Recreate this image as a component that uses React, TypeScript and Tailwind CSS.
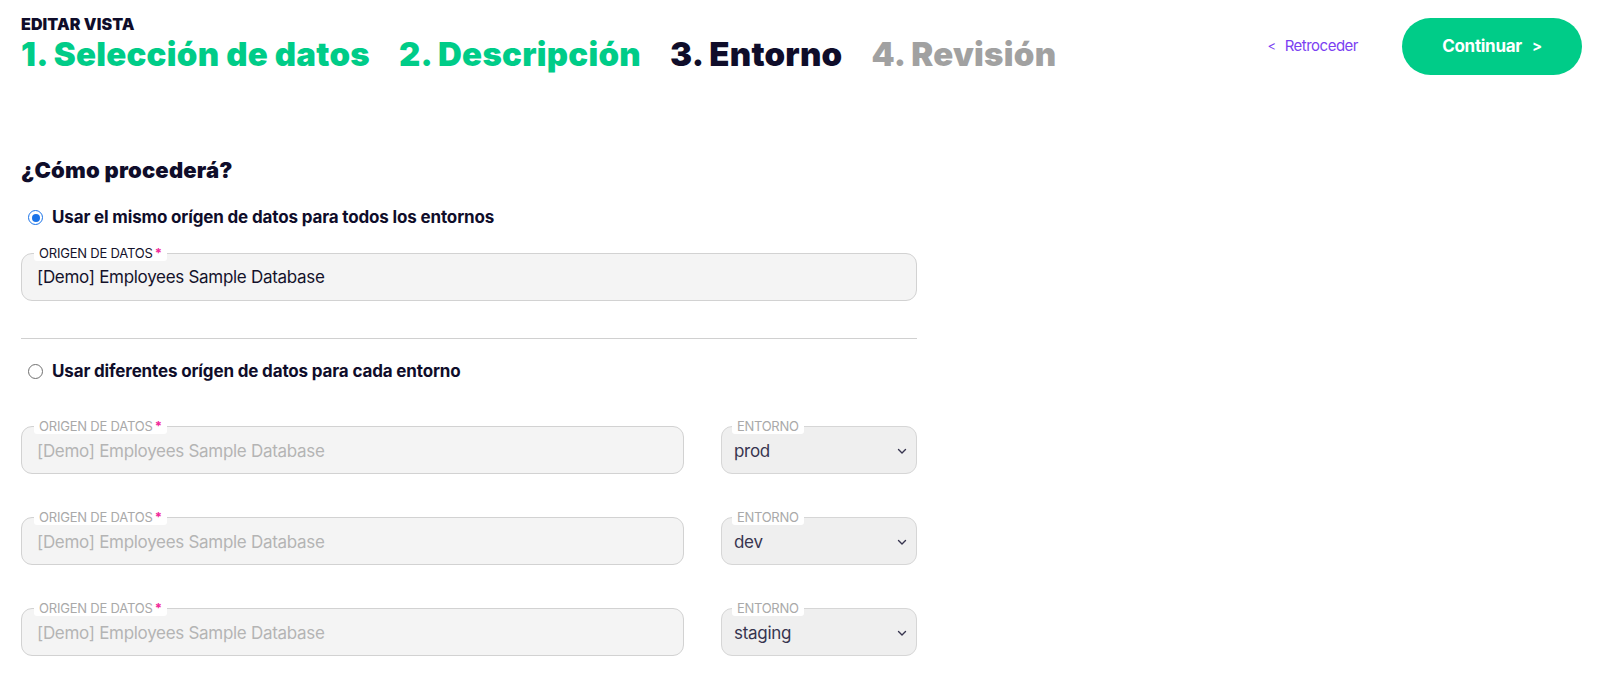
import React, { useState } from 'react';

const green = 'text-[#00cc88]';

const FloatingField = ({
  label,
  required,
  value,
  disabled,
  className,
}: {
  label: string;
  required?: boolean;
  value: string;
  disabled?: boolean;
  className?: string;
}) => (
  <div className={`relative h-[48px] rounded-[11px] border border-[#d2d2d2] bg-[#f4f4f4] flex items-center pl-[15px] pr-4 ${className ?? ''}`}>
    <span
      className={`absolute -top-[9px] left-[12px] bg-white px-[5px] rounded-[3px] text-[13px] leading-[16px] tracking-[-0.2px] ${disabled ? 'text-[#a9a9a9]' : 'text-[#14122b]'}`}
    >
      {label}
      {required && <span className="text-[#f0299a] ml-[2px] font-bold">*</span>}
    </span>
    <span className={`pt-[3px] text-[17px] tracking-[-0.3px] ${disabled ? 'text-[#b4b4b4]' : 'text-[#14122b]'}`}>{value}</span>
  </div>
);

const SelectField = ({ value }: { value: string }) => (
  <div className="relative h-[48px] w-[196px] rounded-[11px] border border-[#d6d6d6] bg-[#efefef] flex items-center justify-between pl-[12px] pr-[8px]">
    <span className="absolute -top-[9px] left-[10px] bg-white px-[5px] rounded-[3px] text-[13px] leading-[16px] tracking-[-0.3px] text-[#a9a9a9]">ENTORNO</span>
    <span className="pt-[3px] text-[17px] text-[#37354f] tracking-[-0.3px]">{value}</span>
    <svg width="12" height="12" viewBox="0 0 12 12" className="mt-[1px]">
      <path d="M2.5 4.5 L6 8 L9.5 4.5" fill="none" stroke="#37354f" strokeWidth="1.4" strokeLinecap="round" strokeLinejoin="round" />
    </svg>
  </div>
);

const Radio = ({ checked }: { checked: boolean }) => (
  <span
    className={`inline-flex items-center justify-center w-[15px] h-[15px] rounded-full border-[1.5px] ${checked ? 'border-[#1a73e8]' : 'border-[#707070]'}`}
  >
    {checked && <span className="w-[8px] h-[8px] rounded-full bg-[#1a73e8]" />}
  </span>
);

export default function App() {
  const [mode, setMode] = useState<'same' | 'diff'>('same');
  const envs = ['prod', 'dev', 'staging'];

  return (
    <div className="min-h-screen bg-white px-[21px] pt-[14px] font-['Inter',sans-serif] text-[#0f0d2a]">
      <header className="flex items-start justify-between">
        <div>
          <div className="text-[16px] font-black leading-[20px] tracking-[0.1px] text-[#0f0d2a]">EDITAR VISTA</div>
          <div className="flex items-center gap-[29px] text-[33px] font-black leading-[40px] tracking-[0.25px]">
            <span className={green}>1. Selección de datos</span>
            <span className={green}>2. Descripción</span>
            <span className="text-[#0f0d2a]">3. Entorno</span>
            <span className="text-[#a1a1a1]">4. Revisión</span>
          </div>
        </div>
        <div className="flex items-center gap-[44px] pt-[4px]">
          <button className="flex items-center gap-[9px] text-[15px] text-[#7b3ff2] tracking-[-0.5px]">
            <span className="text-[13px]">&lt;</span>
            <span>Retroceder</span>
          </button>
          <button className="h-[57px] w-[180px] rounded-full bg-[#00cc88] text-white text-[17px] font-bold flex items-center justify-center gap-[10px] tracking-[-0.3px]">
            <span>Continuar</span>
            <span className="text-[15px]">&gt;</span>
          </button>
        </div>
      </header>

      <section className="mt-[81px] w-[896px]">
        <h2 className="text-[22px] font-black leading-[28px] tracking-[0.2px]">¿Cómo procederá?</h2>

        <label className="mt-[21px] flex items-center gap-[9px] pl-[7px] cursor-pointer" onClick={() => setMode('same')}>
          <Radio checked={mode === 'same'} />
          <span className="text-[17px] font-bold tracking-[-0.15px]">Usar el mismo orígen de datos para todos los entornos</span>
        </label>

        <FloatingField className="mt-[22px]" label="ORIGEN DE DATOS" required value="[Demo] Employees Sample Database" disabled={mode !== 'same'} />

        <div className="mt-[37px] h-px bg-[#d0d0d0]" />

        <label className="mt-[20px] flex items-center gap-[9px] pl-[7px] cursor-pointer" onClick={() => setMode('diff')}>
          <Radio checked={mode === 'diff'} />
          <span className="text-[17px] font-bold tracking-[-0.15px]">Usar diferentes orígen de datos para cada entorno</span>
        </label>

        <div className="mt-[42px] flex flex-col gap-[43px]">
          {envs.map(env => (
            <div key={env} className="flex items-center gap-[37px]">
              <FloatingField className="flex-1" label="ORIGEN DE DATOS" required value="[Demo] Employees Sample Database" disabled={mode !== 'diff'} />
              <SelectField value={env} />
            </div>
          ))}
        </div>
      </section>
    </div>
  );
}
